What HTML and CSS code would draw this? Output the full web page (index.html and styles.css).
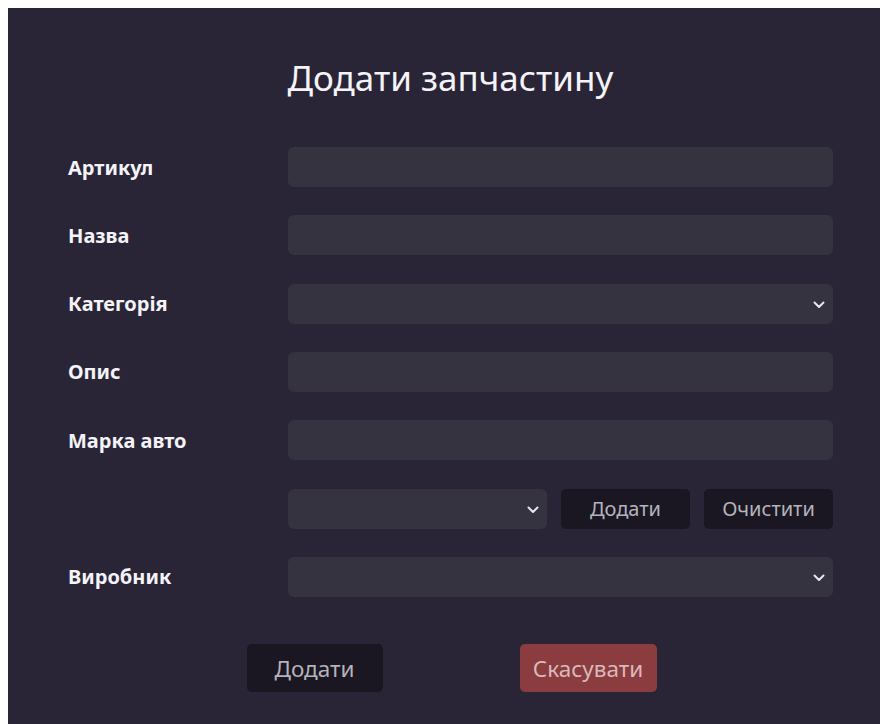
FILE: index.html
```html
<!DOCTYPE html>
<html lang="uk">
<head>
<meta charset="utf-8">
<title>Додати запчастину</title>
<link rel="stylesheet" href="styles.css">
</head>
<body>
<div class="panel">
  <form class="form">
    <h1 class="title">Додати запчастину</h1>

    <div class="row">
      <label class="label" for="sku">Артикул</label>
      <input class="field" id="sku" type="text">
    </div>

    <div class="row">
      <label class="label" for="name">Назва</label>
      <input class="field" id="name" type="text">
    </div>

    <div class="row">
      <label class="label" for="category">Категорія</label>
      <div class="select-wrap">
        <select class="field select" id="category"><option></option></select>
        <svg class="chevron" width="12" height="8" viewBox="0 0 12 8"><path d="M1.5 1.5 6 6 10.5 1.5" fill="none" stroke="#e8e6ee" stroke-width="2" stroke-linecap="round" stroke-linejoin="round"/></svg>
      </div>
    </div>

    <div class="row">
      <label class="label" for="desc">Опис</label>
      <input class="field" id="desc" type="text">
    </div>

    <div class="row">
      <label class="label" for="brand">Марка авто</label>
      <input class="field" id="brand" type="text">
    </div>

    <div class="row">
      <span class="label"></span>
      <div class="brand-tools">
        <div class="select-wrap grow">
          <select class="field select"><option></option></select>
          <svg class="chevron" width="12" height="8" viewBox="0 0 12 8"><path d="M1.5 1.5 6 6 10.5 1.5" fill="none" stroke="#e8e6ee" stroke-width="2" stroke-linecap="round" stroke-linejoin="round"/></svg>
        </div>
        <button class="btn btn-small" type="button">Додати</button>
        <button class="btn btn-small" type="button">Очистити</button>
      </div>
    </div>

    <div class="row">
      <label class="label" for="maker">Виробник</label>
      <div class="select-wrap">
        <select class="field select" id="maker"><option></option></select>
        <svg class="chevron" width="12" height="8" viewBox="0 0 12 8"><path d="M1.5 1.5 6 6 10.5 1.5" fill="none" stroke="#e8e6ee" stroke-width="2" stroke-linecap="round" stroke-linejoin="round"/></svg>
      </div>
    </div>

    <div class="actions">
      <button class="btn btn-large" type="submit">Додати</button>
      <button class="btn btn-large btn-cancel" type="button">Скасувати</button>
    </div>
  </form>
</div>
</body>
</html>
```

FILE: styles.css
```css
html, body {
  background: #ffffff;
}

body {
  margin: 8px 0 0 8px;
  font-family: "Noto Sans", "Open Sans", sans-serif;
  overflow: hidden;
}

.panel {
  background: #292537;
  min-height: 760px;
  padding-top: 46px;
}

.form {
  width: 765px;
  margin-left: 60px;
}

.title {
  margin: 0 0 45px;
  text-align: center;
  font-size: 35px;
  font-weight: 400;
  line-height: 48px;
  color: #f4f3f7;
}

.row {
  display: grid;
  grid-template-columns: 220px 1fr;
  align-items: center;
  margin-bottom: 28.33px;
}

.label {
  font-size: 20px;
  font-weight: 700;
  color: #f4f3f7;
}

.field {
  box-sizing: border-box;
  width: 100%;
  height: 40px;
  border: none;
  border-radius: 6px;
  background: #363341;
  color: #e8e6ee;
  font: inherit;
  padding: 0 12px;
  outline: none;
}

.select {
  appearance: none;
  -webkit-appearance: none;
}

.select-wrap {
  position: relative;
}

.chevron {
  position: absolute;
  right: 8px;
  top: 17px;
  pointer-events: none;
}

.brand-tools {
  display: flex;
  gap: 14px;
}

.grow {
  flex: 1;
}

.btn {
  border: none;
  border-radius: 5px;
  background: #1a1723;
  color: #b5b3bb;
  font-family: "Noto Sans", "Open Sans", sans-serif;
  cursor: pointer;
}

.btn-small {
  width: 129px;
  height: 40px;
  font-size: 20px;
}

.actions {
  display: flex;
  justify-content: center;
  gap: 137px;
  margin-left: 2px;
  padding-top: 19px;
}

.btn-large {
  width: 136px;
  height: 48px;
  font-size: 22.5px;
}

.btn-cancel {
  width: 137px;
  background: #8a3c3e;
  color: #d9b9bb;
}
```
